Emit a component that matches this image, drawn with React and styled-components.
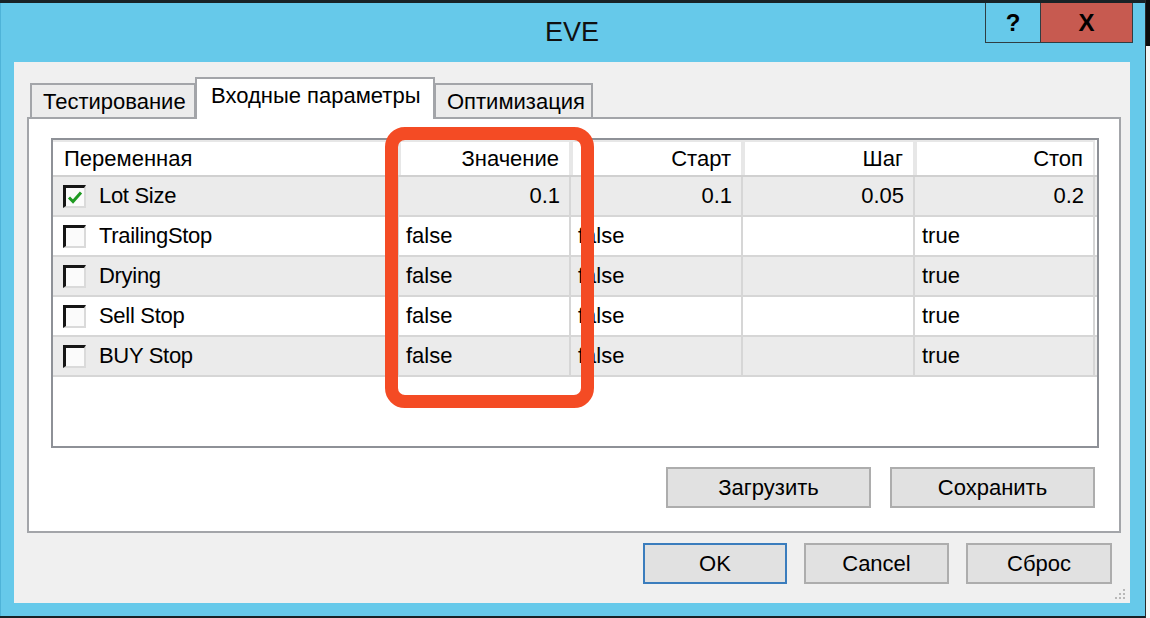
import React from 'react';
import styled, { createGlobalStyle } from 'styled-components';

const GlobalStyle = createGlobalStyle`
  html, body {
    margin: 0;
    padding: 0;
    background: #182226;
  }
  body {
    font-family: 'Liberation Sans', Arial, sans-serif;
    width: 1150px;
    height: 618px;
    overflow: hidden;
    color: #000;
  }
  * { box-sizing: border-box; }
`;

const Screen = styled.div`
  display: flex;
  align-items: flex-start;
  width: 1150px;
  height: 618px;
`;

const Window = styled.div`
  position: relative;
  display: flex;
  flex-direction: column;
  width: 1145px;
  height: 613px;
  margin-top: 3px;
  padding: 0 15px 13px 13px;
  background: #66c9ea;
  border-left: 1px solid #4eb3d8;
`;

const SideStrip = styled.div`
  width: 5px;
  height: 618px;
  background: linear-gradient(#0c0c0c 0 46px, #f6f6f6 46px);
  border-left: 1px solid #2a2a2a;
`;

const TitleBar = styled.div`
  display: flex;
  align-items: center;
  justify-content: center;
  height: 59px;
  font-size: 27px;
  color: #101010;
`;

const CaptionButtons = styled.div`
  position: absolute;
  top: 0;
  right: 12px;
  display: flex;
`;

const CaptionButton = styled.div`
  display: flex;
  align-items: center;
  justify-content: center;
  width: ${p => p.w}px;
  height: 40px;
  background: ${p => p.bg};
  border: 1px solid #2f3d42;
  border-top: none;
  margin-left: -1px;
  font-weight: bold;
  font-size: ${p => p.size}px;
  color: #000;
`;

const Client = styled.div`
  position: relative;
  flex: 1;
  display: flex;
  flex-direction: column;
  padding: 15px 9px 0 13px;
  background: #f0f0f0;
`;

const Tabs = styled.div`
  position: relative;
  z-index: 1;
  display: flex;
  align-items: flex-end;
  height: 42px;
  padding-left: 3px;
  margin-bottom: -2px;
`;

const Tab = styled.div`
  display: flex;
  align-items: center;
  width: ${p => p.w}px;
  height: ${p => (p.active ? 42 : 36)}px;
  padding: ${p => (p.active ? '0 0 6px 14px' : '2px 0 0 11px')};
  margin: 0 ${p => (p.active ? '-1px' : '0')};
  background: ${p => (p.active ? '#ffffff' : '#ececec')};
  border: 2px solid #a3a5a9;
  border-bottom: ${p => (p.active ? 'none' : '2px solid #a3a5a9')};
  font-size: 22px;
  white-space: nowrap;
  z-index: ${p => (p.active ? 2 : 1)};
`;

const Panel = styled.div`
  display: flex;
  flex-direction: column;
  height: 416px;
  padding: 19px 20px 0 22px;
  background: #ffffff;
  border: 2px solid #a3a5a9;
`;

const List = styled.div`
  position: relative;
  height: 310px;
  background: #ffffff;
  border: 2px solid #8e9197;
`;

const columns = '346px 172px 172px 172px 180px';

const HeaderRow = styled.div`
  display: grid;
  grid-template-columns: ${columns};
  height: 37px;
  border-bottom: 2px solid #d0d0d0;
`;

const HeaderCell = styled.div`
  display: flex;
  align-items: center;
  justify-content: ${p => (p.right ? 'flex-end' : 'flex-start')};
  padding: ${p => (p.right ? '0 10px 0 0' : '0 0 0 11px')};
  border: 2px solid #e7e7e7;
  border-left: ${p => (p.first ? 'none' : '2px solid #e7e7e7')};
  border-bottom: none;
  font-size: 22px;
`;

const Row = styled.div`
  display: grid;
  grid-template-columns: ${columns};
  height: 40px;
  background: ${p => (p.shaded ? '#ebebeb' : '#ffffff')};
  border-bottom: 2px solid #d6d6d6;
`;

const Cell = styled.div`
  display: flex;
  align-items: center;
  justify-content: ${p => (p.right ? 'flex-end' : 'flex-start')};
  padding: 0 9px 0 7px;
  border-right: 2px solid #d6d6d6;
  font-size: 22px;
  white-space: nowrap;
`;

const NameCell = styled(Cell)`
  padding-left: 10px;
  gap: 13px;
  letter-spacing: -0.3px;
`;

const CheckBox = styled.div`
  display: flex;
  align-items: center;
  justify-content: center;
  width: 23px;
  height: 23px;
  background: #fbfbfb;
  border-top: 3px solid #151515;
  border-left: 3px solid #151515;
  border-right: 2px solid #dadada;
  border-bottom: 2px solid #dadada;
`;

const Highlight = styled.div`
  position: absolute;
  left: 332px;
  top: -13px;
  width: 209px;
  height: 281px;
  border: 13px solid #f44b24;
  border-radius: 20px;
  pointer-events: none;
  z-index: 3;
`;

const ButtonRow = styled.div`
  display: flex;
  justify-content: flex-end;
  gap: ${p => p.gap}px;
  margin-top: ${p => p.top}px;
  padding-right: ${p => p.right}px;
`;

const Button = styled.div`
  display: flex;
  align-items: center;
  justify-content: center;
  width: ${p => p.w}px;
  height: 41px;
  background: #e1e1e1;
  border: 2px solid ${p => (p.primary ? '#3b7dbd' : '#adadad')};
  font-size: 22px;
`;

const Grip = styled.svg`
  position: absolute;
  right: 4px;
  bottom: 3px;
`;

const rows = [
  { name: 'Lot Size', checked: true, value: '0.1', start: '0.1', step: '0.05', stop: '0.2', numeric: true },
  { name: 'TrailingStop', value: 'false', start: 'false', step: '', stop: 'true' },
  { name: 'Drying', value: 'false', start: 'false', step: '', stop: 'true' },
  { name: 'Sell Stop', value: 'false', start: 'false', step: '', stop: 'true' },
  { name: 'BUY Stop', value: 'false', start: 'false', step: '', stop: 'true' },
];

const CheckMark = () => (
  <svg width="16" height="14" viewBox="0 0 16 14">
    <path d="M2 7.5 L6 11.5 L14 2.5" fill="none" stroke="#1f9a22" strokeWidth="3" />
  </svg>
);

const App = () => (
  <>
    <GlobalStyle />
    <Screen>
      <Window>
        <TitleBar>EVE</TitleBar>
        <CaptionButtons>
          <CaptionButton w={56} bg="transparent" size={24}>?</CaptionButton>
          <CaptionButton w={93} bg="#c75a50" size={24}>X</CaptionButton>
        </CaptionButtons>
        <Client>
          <Tabs>
            <Tab w={166}>Тестирование</Tab>
            <Tab w={240} active>Входные параметры</Tab>
            <Tab w={159}>Оптимизация</Tab>
          </Tabs>
          <Panel>
            <List>
              <HeaderRow>
                <HeaderCell first>Переменная</HeaderCell>
                <HeaderCell right>Значение</HeaderCell>
                <HeaderCell right>Старт</HeaderCell>
                <HeaderCell right>Шаг</HeaderCell>
                <HeaderCell right>Стоп</HeaderCell>
              </HeaderRow>
              {rows.map((row, index) => (
                <Row key={row.name} shaded={index % 2 === 0}>
                  <NameCell>
                    <CheckBox>{row.checked && <CheckMark />}</CheckBox>
                    {row.name}
                  </NameCell>
                  <Cell right={row.numeric}>{row.value}</Cell>
                  <Cell right={row.numeric}>{row.start}</Cell>
                  <Cell right={row.numeric}>{row.step}</Cell>
                  <Cell right={row.numeric}>{row.stop}</Cell>
                </Row>
              ))}
              <Highlight />
            </List>
            <ButtonRow gap={19} top={19} right={4}>
              <Button w={205}>Загрузить</Button>
              <Button w={205}>Сохранить</Button>
            </ButtonRow>
          </Panel>
          <ButtonRow gap={17} top={10} right={9}>
            <Button w={144} primary>OK</Button>
            <Button w={145}>Cancel</Button>
            <Button w={146}>Сброс</Button>
          </ButtonRow>
          <Grip width="12" height="12" viewBox="0 0 12 12">
            {[[9, 1], [9, 5], [5, 5], [9, 9], [5, 9], [1, 9]].map(([x, y]) => (
              <rect key={`${x}-${y}`} x={x} y={y} width="2" height="2" fill="#b8b8b8" />
            ))}
          </Grip>
        </Client>
      </Window>
      <SideStrip />
    </Screen>
  </>
);

export default App;
